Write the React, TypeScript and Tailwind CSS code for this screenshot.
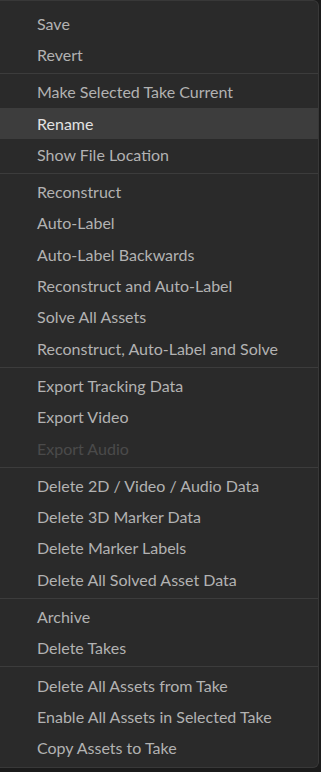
type Item = { label: string; active?: boolean; disabled?: boolean }

const groups: Item[][] = [
    [{ label: "Save" }, { label: "Revert" }],
    [{ label: "Make Selected Take Current" }, { label: "Rename", active: true }, { label: "Show File Location" }],
    [
        { label: "Reconstruct" },
        { label: "Auto-Label" },
        { label: "Auto-Label Backwards" },
        { label: "Reconstruct and Auto-Label" },
        { label: "Solve All Assets" },
        { label: "Reconstruct, Auto-Label and Solve" },
    ],
    [{ label: "Export Tracking Data" }, { label: "Export Video" }, { label: "Export Audio", disabled: true }],
    [
        { label: "Delete 2D / Video / Audio Data" },
        { label: "Delete 3D Marker Data" },
        { label: "Delete Marker Labels" },
        { label: "Delete All Solved Asset Data" },
    ],
    [{ label: "Archive" }, { label: "Delete Takes" }],
    [{ label: "Delete All Assets from Take" }, { label: "Enable All Assets in Selected Take" }, { label: "Copy Assets to Take" }],
]

function MenuItem({ label, active, disabled }: Item) {
    const color = disabled ? "text-[#4a4a4a]" : active ? "text-[#e2e2e2] bg-[#3d3d3d]" : "text-[#b2b2b2]"
    return (
        <div className={`h-[31.3px] flex items-center pl-[37px] text-[16px] leading-none whitespace-nowrap ${color}`}>
            {label}
        </div>
    )
}

export default function App() {
    return (
        <div className="w-[321px] h-[772px] bg-[#1b1b1b] overflow-hidden" style={{ fontFamily: "Lato, 'Open Sans', sans-serif" }}>
            <div className="w-[319px] h-[768px] bg-[#2a2a2a] border-t border-r border-b border-[#383838] rounded-r-[6px] pt-[7px]">
                {groups.map((group, gi) => (
                    <div key={gi}>
                        {gi > 0 && (
                            <div className="h-[6px] flex items-center">
                                <div className="h-px w-full bg-[#3c3c3c]" />
                            </div>
                        )}
                        {group.map(item => (
                            <MenuItem key={item.label} {...item} />
                        ))}
                    </div>
                ))}
            </div>
        </div>
    )
}
